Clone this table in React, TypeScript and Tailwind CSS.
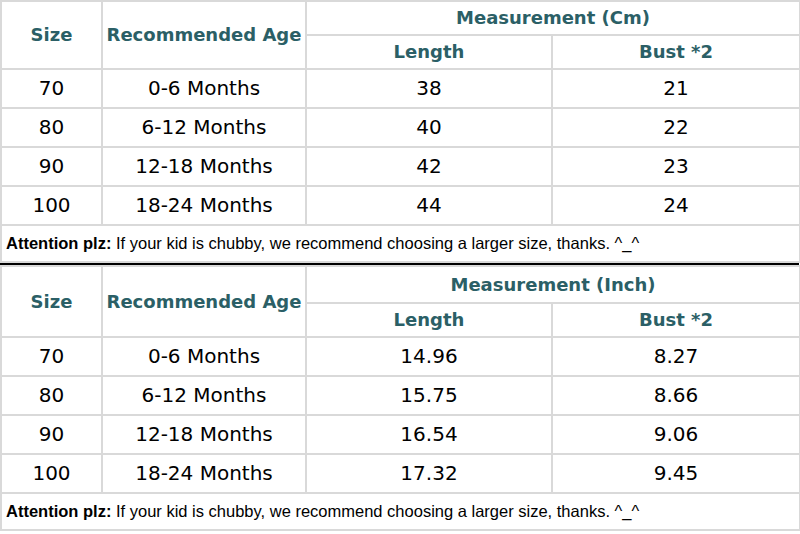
const comic = "font-['Comic_Sans_MS','DejaVu_Sans',sans-serif]";

type Row = [string, string, string, string];

const cmRows: Row[] = [
  ['70', '0-6 Months', '38', '21'],
  ['80', '6-12 Months', '40', '22'],
  ['90', '12-18 Months', '42', '23'],
  ['100', '18-24 Months', '44', '24'],
];

const inchRows: Row[] = [
  ['70', '0-6 Months', '14.96', '8.27'],
  ['80', '6-12 Months', '15.75', '8.66'],
  ['90', '12-18 Months', '16.54', '9.06'],
  ['100', '18-24 Months', '17.32', '9.45'],
];

function SizeTable({ unit, rows, topH, subH }: { unit: string; rows: Row[]; topH: string; subH: string }) {
  const cell = 'border-2 border-[#d9d9d9] text-center align-middle p-0 whitespace-nowrap leading-none';
  const head = `${cell} ${comic} font-bold text-[#2b5f66] text-[18px]`;
  const body = `${cell} ${comic} text-black text-[20px] h-[39px] pb-[2px]`;
  return (
    <table className="w-[799px] table-fixed border-collapse">
      <colgroup>
        <col className="w-[101px]" />
        <col className="w-[204px]" />
        <col className="w-[246px]" />
        <col className="w-[248px]" />
      </colgroup>
      <tbody>
        <tr className={topH}>
          <td rowSpan={2} className={head}>Size</td>
          <td rowSpan={2} className={head}>Recommended Age</td>
          <td colSpan={2} className={head}>Measurement ({unit})</td>
        </tr>
        <tr className={subH}>
          <td className={head}>Length</td>
          <td className={head}>Bust *2</td>
        </tr>
        {rows.map((r) => (
          <tr key={r[0]}>
            {r.map((v, i) => (
              <td key={i} className={body}>{v}</td>
            ))}
          </tr>
        ))}
        <tr className="h-[37px]">
          <td colSpan={4} className="border-2 border-[#d9d9d9] pl-[4px] text-left align-middle whitespace-nowrap leading-none font-['Liberation_Sans',Arial,sans-serif] text-[16.5px] text-black">
            <span className="font-bold">Attention plz:</span> If your kid is chubby, we recommend choosing a larger size, thanks. ^_^
          </td>
        </tr>
      </tbody>
    </table>
  );
}

export default function App() {
  return (
    <div className="w-[800px] h-[534px] bg-white overflow-hidden">
      <SizeTable unit="Cm" rows={cmRows} topH="h-[34px]" subH="h-[34px]" />
      <div className="h-[2px] w-[799px] bg-black" />
      <SizeTable unit="Inch" rows={inchRows} topH="h-[37px]" subH="h-[34px]" />
    </div>
  );
}
